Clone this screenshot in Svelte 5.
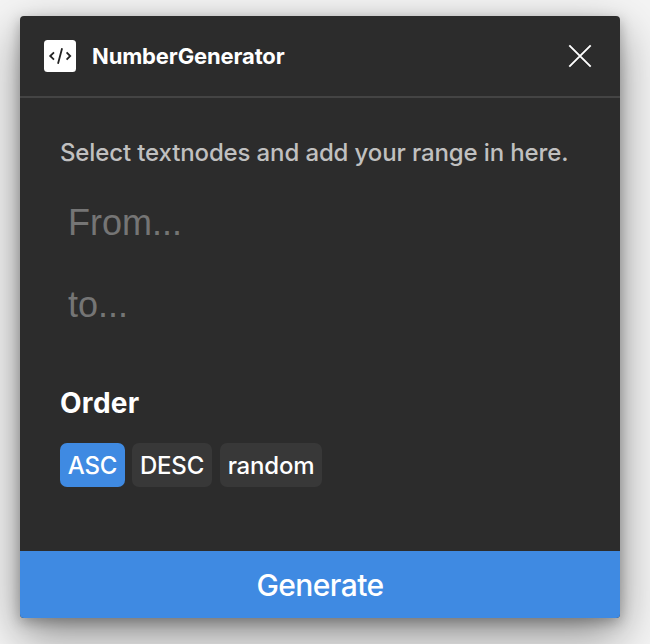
<script>
  let from = $state('');
  let to = $state('');
  let order = $state('ASC');
  const orders = ['ASC', 'DESC', 'random'];
</script>

<main>
  <section class="panel">
    <header>
      <svg class="logo" width="32" height="32" viewBox="0 0 32 32" fill="none">
        <rect width="32" height="32" rx="3.5" fill="#fff" />
        <path d="M10 12.4 6.2 16l3.8 3.6M22.6 12.4 26.2 16l-3.6 3.6M18.1 8.2l-4.1 15.6" stroke="#222" stroke-width="1.8" />
      </svg>
      <h1>NumberGenerator</h1>
      <button class="close" aria-label="Close">
        <svg width="24" height="24" viewBox="0 0 24 24" fill="none">
          <path d="M1.3 1.3l21.4 21.4M22.7 1.3l-21.4 21.4" stroke="#fff" stroke-width="1.9" />
        </svg>
      </button>
    </header>
    <div class="body">
      <p>Select textnodes and add your range in here.</p>
      <input class="from" placeholder="From..." aria-label="From" bind:value={from} />
      <input class="to" placeholder="to..." aria-label="To" bind:value={to} />
      <h2>Order</h2>
      <div class="chips">
        {#each orders as o}
          <button class="chip {o.toLowerCase()}" class:active={order === o} onclick={() => (order = o)}>{o}</button>
        {/each}
      </div>
    </div>
    <button class="generate">Generate</button>
  </section>
</main>

<style>
  :global(body) { background: #f4f4f4; }
  main {
    box-sizing: border-box;
    width: 650px;
    height: 644px;
    padding: 16px 30px 0 20px;
    overflow: hidden;
    font-family: Inter, sans-serif;
  }
  button { border: 0; padding: 0; margin: 0; font-family: inherit; color: #fff; cursor: pointer; }
  .panel {
    display: flex;
    flex-direction: column;
    width: 600px;
    height: 602px;
    border-radius: 4px;
    overflow: hidden;
    background: #2c2c2c;
    box-shadow: 0 17px 46px rgba(0, 0, 0, 0.44), 0 4px 13px rgba(0, 0, 0, 0.26);
  }
  header {
    box-sizing: border-box;
    flex: none;
    display: flex;
    align-items: center;
    height: 82px;
    padding: 0 28px 0 24px;
    border-bottom: 2px solid #444;
  }
  h1 {
    margin: 0 auto 0 16px;
    font-size: 22px;
    line-height: 32px;
    font-weight: 700;
    letter-spacing: -0.14px;
    color: #fff;
  }
  .close { display: flex; background: none; }
  .body { flex: 1; display: flex; flex-direction: column; padding: 39px 40px 0; }
  p {
    margin: 0;
    font-size: 24px;
    line-height: 32px;
    color: #c0c0c0;
    white-space: nowrap;
    font-weight: 450;
    letter-spacing: -0.13px;
  }
  input {
    box-sizing: border-box;
    width: 520px;
    height: 60px;
    padding: 0 8px;
    border: 0;
    outline: 0;
    background: none;
    color: #fff;
    font: 36px/60px "Liberation Sans", Arial, sans-serif;
  }
  input::placeholder { color: #757575; opacity: 1; }
  .from { margin-top: 24px; }
  .to { margin-top: 22px; }
  h2 { margin: 48px 0 0; font-size: 28px; line-height: 40px; font-weight: 700; letter-spacing: 0.3px; color: #fff; }
  .chips { display: flex; gap: 8px; margin-top: 20px; }
  .chip {
    box-sizing: border-box;
    height: 44px;
    padding-top: 2px;
    border-radius: 7px;
    background: #383838;
    font-size: 24px;
    font-weight: 450;
    letter-spacing: -0.2px;
    line-height: 42px;
    text-align: center;
  }
  .asc { width: 65px; margin-right: -1px; }
  .desc { width: 80px; }
  .random { width: 102px; }
  .chip.active { background: #3f8ae2; }
  .generate { box-sizing: border-box; height: 67px; padding-top: 2px; background: #3f8ae2; font-size: 30px; font-weight: 450; line-height: 65px; letter-spacing: -0.6px; }
</style>
